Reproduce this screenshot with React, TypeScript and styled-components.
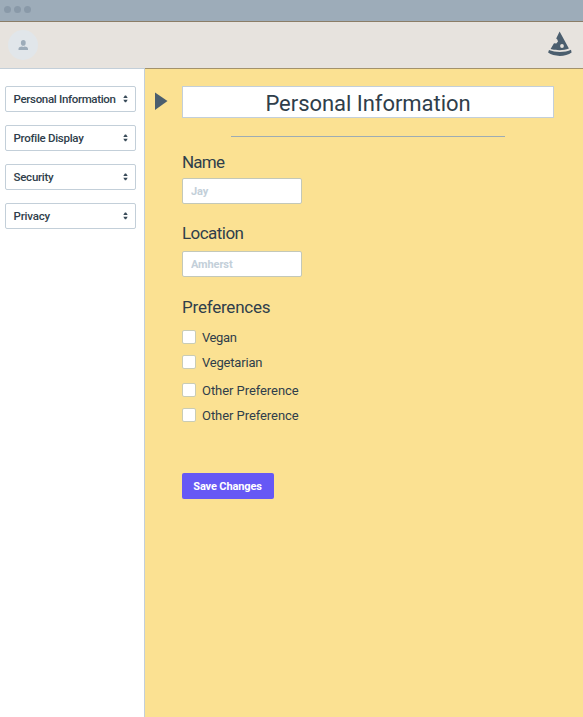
import React from "react";
import styled, { createGlobalStyle } from "styled-components";

const Global = createGlobalStyle`
  * { box-sizing: border-box; }
  body { margin: 0; background: #fbe192; font-family: Roboto, "Liberation Sans", sans-serif; color: #2f3e4b; }
`;
const Page = styled.div`
  width: 583px;
  height: 717px;
  display: flex;
  flex-direction: column;
  overflow: hidden;
`;
const WindowBar = styled.div`
  height: 22px;
  flex: none;
  display: flex;
  gap: 3px;
  padding: 6px 4px;
  background: #9dacb9;
  border-bottom: 1px solid #8b7d67;
`;
const Dot = styled.i`
  width: 7px;
  height: 7px;
  border-radius: 50%;
  background: #8999a8;
`;
const Header = styled.header`
  height: 46px;
  flex: none;
  display: flex;
  justify-content: space-between;
  padding: 8px 10px 0 8px;
  background: #e7e3de;
`;
const Avatar = styled.div`
  width: 30px;
  height: 30px;
  border-radius: 50%;
  background: #e1e6ea;
  svg { display: block; }
`;
const Body = styled.div`
  flex: 1;
  display: flex;
`;
const Sidebar = styled.nav`
  width: 145px;
  flex: none;
  display: flex;
  flex-direction: column;
  gap: 13px;
  padding: 17px 8px 0 5px;
  background: #fff;
  border-top: 1px solid #c3cfd9;
  border-right: 1px solid #c3cfd9;
`;
const Select = styled.button`
  height: 26px;
  display: flex;
  align-items: center;
  justify-content: space-between;
  padding: 0 7px 0 7.5px;
  border: 1px solid #c3cfd9;
  border-radius: 2px;
  background: #fff;
  font-family: inherit;
  color: inherit;
`;
const Text = styled.span<{ $size: number; $track?: number; $weight?: number }>`
  font-size: ${(p) => p.$size}px;
  letter-spacing: ${(p) => p.$track ?? 0}px;
  font-weight: ${(p) => p.$weight ?? 400};
  white-space: nowrap;
`;
const Content = styled.main`
  flex: 1;
  display: flex;
  align-items: flex-start;
  gap: 14px;
  padding: 17px 29px 0 10px;
  background: #fbe192;
  border-top: 1px solid #a3926b;
`;
const Arrow = styled.svg`
  flex: none;
  margin-top: 6px;
`;
const Form = styled.form`
  flex: 1;
  display: flex;
  flex-direction: column;
  align-items: flex-start;
`;
const Title = styled.h1`
  width: 372px;
  height: 32px;
  margin: 0 0 1px;
  display: flex;
  align-items: center;
  justify-content: center;
  padding-top: 3px;
  background: #fff;
  border: 1px solid #c3cfd9;
`;
const Rule = styled.hr`
  width: 274px;
  height: 1px;
  margin: 17px 0 15px 49px;
  border: 0;
  background: #9dacb4;
`;
const Label = styled.label<{ $gap: number }>`
  height: 20px;
  line-height: 20px;
  display: block;
  margin-bottom: ${(p) => p.$gap}px;
`;
const Input = styled.input<{ $gap: number; $track: number }>`
  width: 120px;
  height: 26px;
  margin: 0 0 ${(p) => p.$gap}px;
  padding: 0 8px;
  border: 1px solid #c3c8b9;
  border-radius: 2px;
  background: #fff;
  font: 700 11px Roboto, sans-serif;
  letter-spacing: ${(p) => p.$track}px;
  &::placeholder { color: #c3cfd9; opacity: 1; }
`;
const Option = styled.label<{ $gap: number }>`
  height: 14px;
  display: flex;
  align-items: center;
  gap: 6px;
  margin-bottom: ${(p) => p.$gap}px;
`;
const Checkbox = styled.input.attrs({ type: "checkbox" })`
  appearance: none;
  width: 14px;
  height: 14px;
  margin: 0;
  border: 1px solid #c9ccb5;
  border-radius: 2px;
  background: #fff;
`;
const Save = styled.button`
  width: 92px;
  height: 26px;
  margin-left: -0.5px;
  padding: 0 0 2px;
  border: 0;
  border-radius: 2px;
  background: #6658f5;
  color: #fff;
  font-family: inherit;
`;

const sections = [
  { name: "Personal Information", track: -0.32 },
  { name: "Profile Display", track: -0.28 },
  { name: "Security", track: -0.25 },
  { name: "Privacy", track: -0.2 },
];
const preferences = [
  { name: "Vegan", gap: 11, track: -0.4 },
  { name: "Vegetarian", gap: 14, track: -0.2 },
  { name: "Other Preference", gap: 11, track: -0.06 },
  { name: "Other Preference", gap: 51, track: -0.06 },
];

const Sorter = () => (
  <svg width="5" height="8" viewBox="0 0 5 8" fill="#394b59">
    <path d="M.3 3 1.9.4h1.2L4.7 3ZM.3 4.8h4.4L3.1 7.3H1.9Z" />
  </svg>
);

const Pizza = () => (
  <svg width="26" height="29" viewBox="0 0 26 29">
    <path d="M12.6 1.6 21.9 18.6C17 20.6 9.4 20.7 3.6 19L7 13.2 9.3 13.4 11 11.6 10.3 9.5 9.2 8.6Z" fill="#4b5e6e" />
    <path d="M2 19.9c6.2 2.7 16.2 2.7 22-.2l.6 2.7c-5.7 4.6-17.8 4.6-23.5.2Z" fill="#4b5e6e" />
    <circle cx="15" cy="16" r="1.9" fill="#e7e3de" />
  </svg>
);

export default function App() {
  return (
    <Page>
      <Global />
      <WindowBar><Dot /><Dot /><Dot /></WindowBar>
      <Header>
        <Avatar>
          <svg width="30" height="30" viewBox="0 0 30 30" fill="#9dacb9">
            <ellipse cx="15.3" cy="12.9" rx="2.4" ry="2.8" />
            <path d="M10.5 20v-1.2c0-1.5 2-2.2 3.4-2.2 1 .5 1.8.5 2.8 0 1.4 0 3.3.7 3.3 2.2V20Z" />
          </svg>
        </Avatar>
        <Pizza />
      </Header>
      <Body>
        <Sidebar>
          {sections.map((s) => (
            <Select key={s.name}>
              <Text $size={11.5} $weight={500} $track={s.track}>{s.name}</Text>
              <Sorter />
            </Select>
          ))}
        </Sidebar>
        <Content>
          <Arrow width="13" height="18" viewBox="0 0 13 18" fill="#4b5e6e"><path d="M0 .5 12.5 9 0 18Z" /></Arrow>
          <Form>
            <Title><Text $size={22} $track={-0.04}>Personal Information</Text></Title>
            <Rule />
            <Label $gap={6}><Text $size={17} $track={-0.8}>Name</Text></Label>
            <Input placeholder="Jay" $gap={19} $track={-0.1} />
            <Label $gap={8}><Text $size={17} $track={-0.55}>Location</Text></Label>
            <Input placeholder="Amherst" $gap={20} $track={-0.1} />
            <Label $gap={13}><Text $size={17} $track={-0.22}>Preferences</Text></Label>
            {preferences.map((p, i) => (
              <Option key={i} $gap={p.gap}>
                <Checkbox />
                <Text $size={13} $track={p.track}>{p.name}</Text>
              </Option>
            ))}
            <Save type="button"><Text $size={11} $weight={700} $track={-0.13}>Save Changes</Text></Save>
          </Form>
        </Content>
      </Body>
    </Page>
  );
}
